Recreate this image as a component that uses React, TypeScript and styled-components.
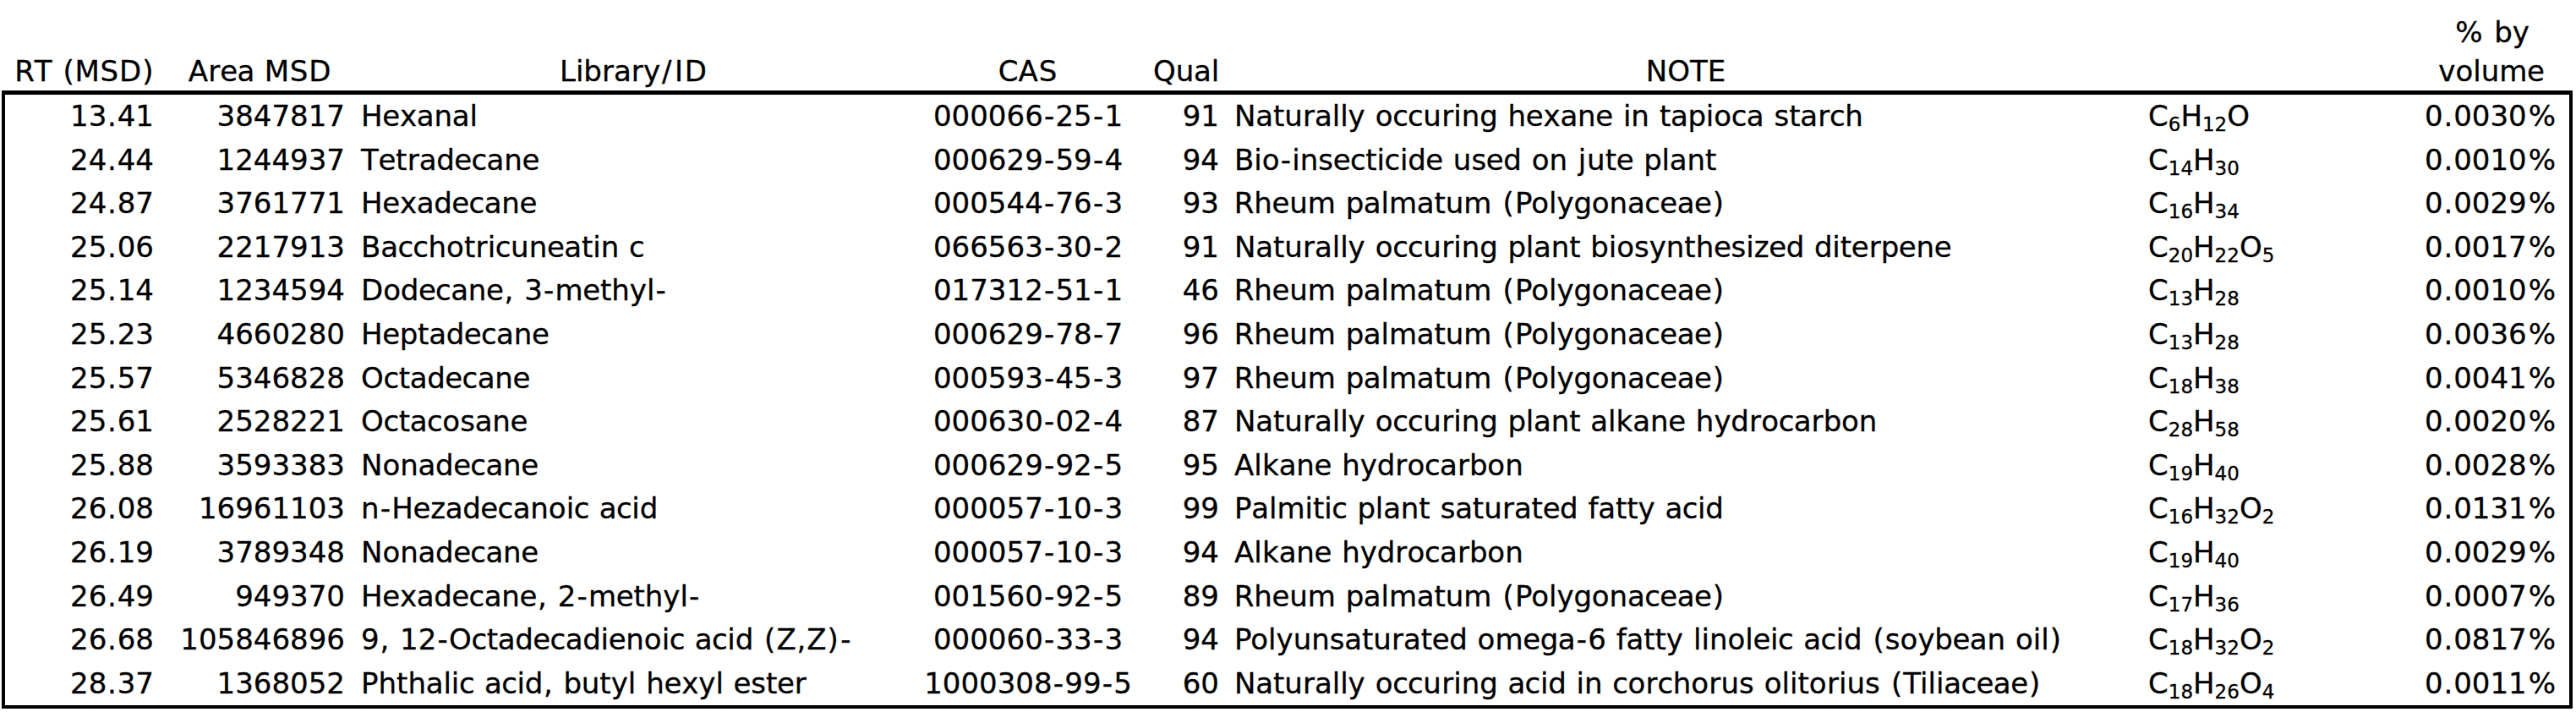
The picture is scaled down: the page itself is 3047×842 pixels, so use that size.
import React from "react";
import styled, { createGlobalStyle } from "styled-components";

const GlobalStyle = createGlobalStyle`
  html, body {
    margin: 0;
    padding: 0;
    background: #ffffff;
  }
  body {
    font-family: "DejaVu Sans", Verdana, sans-serif;
    color: #000000;
  }
`;

const COLS = "188px 226px 658px 276px 98px 1084px 319px 184px";

type Align = "left" | "right" | "center";

const Page = styled.div`
  padding: 15px 0 0 2px;
  width: 3041px;
  font-family: "DejaVu Sans", Verdana, sans-serif;
  font-size: 34px;
  word-spacing: 1.2px;
  color: #000;
  -webkit-text-stroke: 0.3px #000;
`;

const HeaderRow = styled.div`
  display: grid;
  grid-template-columns: ${COLS};
  padding: 0 4px;
  align-items: end;
`;

const HeaderCell = styled.div`
  text-align: center;
  line-height: 46px;
  white-space: nowrap;
`;

const Body = styled.div`
  border: 4px solid #000;
  border-top-width: 5px;
`;

const Row = styled.div`
  display: grid;
  grid-template-columns: ${COLS};
  height: 51.6px;
  line-height: 51.6px;
`;

const Cell = styled.div<{ $align: Align; $pad?: number }>`
  text-align: ${(p) => p.$align};
  white-space: nowrap;
  overflow: visible;
  padding-left: ${(p) => (p.$align === "left" ? `${p.$pad ?? 0}px` : "0")};
  padding-right: ${(p) => (p.$align === "right" ? `${p.$pad ?? 0}px` : "0")};
`;

/* widens (or narrows) each glyph's advance, keeping the glyph centred in it */
const Adj = styled.span<{ $ls: number }>`
  letter-spacing: ${(p) => p.$ls}px;
  margin-left: ${(p) => p.$ls / 2}px;
  margin-right: ${(p) => -p.$ls / 2}px;
`;

const Sub = styled.sub`
  font-size: 23px;
  vertical-align: -6px;
  line-height: 0;
`;

/* per-glyph advance corrections (Verdana vs DejaVu Sans at 34px) */
const ADJ: Record<string, number> = {
  a: -0.4,
  c: -0.8,
  e: -0.6,
  r: 0.5,
  k: 0.4,
  b: -0.4,
  d: -0.4,
  g: -0.4,
  p: -0.4,
  q: -0.4,
  j: 1.6,
  I: 3.4,
  S: 1.7,
  M: -0.7,
  R: -0.4,
  "(": 2.2,
  ")": 2.2,
  "-": 2.4,
  ",": 1.6,
  ".": 1.6,
  "/": 3.6,
  "%": 4.0,
};

function Text({ children }: { children: string }) {
  const segs: { t: string; d: number }[] = [];
  for (const ch of children) {
    const d = ADJ[ch] ?? 0;
    const last = segs[segs.length - 1];
    if (last && last.d === d) last.t += ch;
    else segs.push({ t: ch, d });
  }
  return (
    <>
      {segs.map((s, i) =>
        s.d === 0 ? (
          <React.Fragment key={i}>{s.t}</React.Fragment>
        ) : (
          <Adj key={i} $ls={s.d}>
            {s.t}
          </Adj>
        )
      )}
    </>
  );
}

type Entry = {
  rt: string;
  area: string;
  lib: string;
  cas: string;
  qual: string;
  note: string;
  formula: string;
  pct: string;
};

const rows: Entry[] = [
  { rt: "13.41", area: "3847817", lib: "Hexanal", cas: "000066-25-1", qual: "91", note: "Naturally occuring hexane in tapioca starch", formula: "C6H12O", pct: "0.0030%" },
  { rt: "24.44", area: "1244937", lib: "Tetradecane", cas: "000629-59-4", qual: "94", note: "Bio-insecticide used on jute plant", formula: "C14H30", pct: "0.0010%" },
  { rt: "24.87", area: "3761771", lib: "Hexadecane", cas: "000544-76-3", qual: "93", note: "Rheum palmatum (Polygonaceae)", formula: "C16H34", pct: "0.0029%" },
  { rt: "25.06", area: "2217913", lib: "Bacchotricuneatin c", cas: "066563-30-2", qual: "91", note: "Naturally occuring plant biosynthesized diterpene", formula: "C20H22O5", pct: "0.0017%" },
  { rt: "25.14", area: "1234594", lib: "Dodecane, 3-methyl-", cas: "017312-51-1", qual: "46", note: "Rheum palmatum (Polygonaceae)", formula: "C13H28", pct: "0.0010%" },
  { rt: "25.23", area: "4660280", lib: "Heptadecane", cas: "000629-78-7", qual: "96", note: "Rheum palmatum (Polygonaceae)", formula: "C13H28", pct: "0.0036%" },
  { rt: "25.57", area: "5346828", lib: "Octadecane", cas: "000593-45-3", qual: "97", note: "Rheum palmatum (Polygonaceae)", formula: "C18H38", pct: "0.0041%" },
  { rt: "25.61", area: "2528221", lib: "Octacosane", cas: "000630-02-4", qual: "87", note: "Naturally occuring plant alkane hydrocarbon", formula: "C28H58", pct: "0.0020%" },
  { rt: "25.88", area: "3593383", lib: "Nonadecane", cas: "000629-92-5", qual: "95", note: "Alkane hydrocarbon", formula: "C19H40", pct: "0.0028%" },
  { rt: "26.08", area: "16961103", lib: "n-Hezadecanoic acid", cas: "000057-10-3", qual: "99", note: "Palmitic plant saturated fatty acid", formula: "C16H32O2", pct: "0.0131%" },
  { rt: "26.19", area: "3789348", lib: "Nonadecane", cas: "000057-10-3", qual: "94", note: "Alkane hydrocarbon", formula: "C19H40", pct: "0.0029%" },
  { rt: "26.49", area: "949370", lib: "Hexadecane, 2-methyl-", cas: "001560-92-5", qual: "89", note: "Rheum palmatum (Polygonaceae)", formula: "C17H36", pct: "0.0007%" },
  { rt: "26.68", area: "105846896", lib: "9, 12-Octadecadienoic acid (Z,Z)-", cas: "000060-33-3", qual: "94", note: "Polyunsaturated omega-6 fatty linoleic acid (soybean oil)", formula: "C18H32O2", pct: "0.0817%" },
  { rt: "28.37", area: "1368052", lib: "Phthalic acid, butyl hexyl ester", cas: "1000308-99-5", qual: "60", note: "Naturally occuring acid in corchorus olitorius (Tiliaceae)", formula: "C18H26O4", pct: "0.0011%" },
];

function Formula({ text }: { text: string }) {
  const parts = text.match(/[A-Z][a-z]?|\d+/g) || [];
  return (
    <>
      {parts.map((p, i) =>
        /^\d+$/.test(p) ? <Sub key={i}>{p}</Sub> : <React.Fragment key={i}>{p}</React.Fragment>
      )}
    </>
  );
}

export default function App() {
  return (
    <>
      <GlobalStyle />
      <Page>
        <HeaderRow>
          <HeaderCell><Text>RT (MSD)</Text></HeaderCell>
          <HeaderCell><Text>Area MSD</Text></HeaderCell>
          <HeaderCell><Text>Library/ID</Text></HeaderCell>
          <HeaderCell><Text>CAS</Text></HeaderCell>
          <HeaderCell><Text>Qual</Text></HeaderCell>
          <HeaderCell><Text>NOTE</Text></HeaderCell>
          <HeaderCell />
          <HeaderCell>
            <Text>% by</Text>
            <br />
            <Text>volume</Text>
          </HeaderCell>
        </HeaderRow>
        <Body>
          {rows.map((r, i) => (
            <Row key={i}>
              <Cell $align="right" $pad={12}><Text>{r.rt}</Text></Cell>
              <Cell $align="right" $pad={12}>{r.area}</Cell>
              <Cell $align="left" $pad={7}><Text>{r.lib}</Text></Cell>
              <Cell $align="center"><Text>{r.cas}</Text></Cell>
              <Cell $align="right" $pad={10}>{r.qual}</Cell>
              <Cell $align="left" $pad={8}><Text>{r.note}</Text></Cell>
              <Cell $align="left" $pad={5}>
                <Formula text={r.formula} />
              </Cell>
              <Cell $align="right" $pad={14}><Text>{r.pct}</Text></Cell>
            </Row>
          ))}
        </Body>
      </Page>
    </>
  );
}
